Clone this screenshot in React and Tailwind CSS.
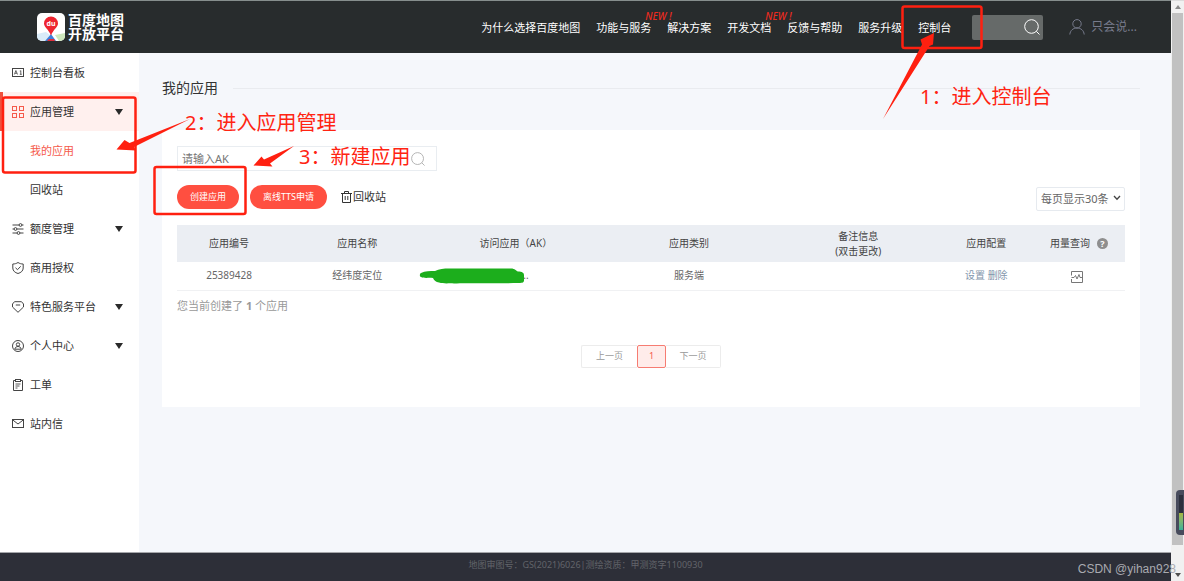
const NAV_ITEMS = [
  { label: '为什么选择百度地图' },
  { label: '功能与服务', isNew: true },
  { label: '解决方案' },
  { label: '开发文档', isNew: true },
  { label: '反馈与帮助' },
  { label: '服务升级' },
  { label: '控制台' },
];

const MENU = [
  { label: '控制台看板', icon: 'board' },
  { label: '应用管理', icon: 'apps', expandable: true, active: true },
  { label: '我的应用', selected: true },
  { label: '回收站' },
  { label: '额度管理', icon: 'sliders', expandable: true },
  { label: '商用授权', icon: 'shield' },
  { label: '特色服务平台', icon: 'gem', expandable: true },
  { label: '个人中心', icon: 'user', expandable: true },
  { label: '工单', icon: 'clipboard' },
  { label: '站内信', icon: 'mail' },
];

const ICONS = {
  board: (
    <>
      <rect x="0.5" y="1.5" width="11" height="8" />
      <path d="M2.3 7.500 3.900 3.500l1.600 4M3 6.300h1.900M8.800 3.500v4M7.800 7.300h2M7.800 4h1" strokeWidth="0.8" />
    </>
  ),
  apps: (
    <>
      <rect x="0.5" y="0.5" width="4" height="4" />
      <rect x="7.5" y="0.5" width="4" height="4" />
      <rect x="0.5" y="7.5" width="4" height="4" />
      <rect x="7.5" y="7.5" width="4" height="4" />
    </>
  ),
  sliders: (
    <>
      <path d="M0.5 2H7M10 2h1.500M0.500 6H2M5 6h6.500M0.500 10H5M8 10h3.500" />
      <circle cx="8.5" cy="2" r="1.4" />
      <circle cx="3.5" cy="6" r="1.4" />
      <circle cx="6.5" cy="10" r="1.4" />
    </>
  ),
  shield: (
    <>
      <path d="M6 0.5C7.500 1.500 9.300 2 11.200 2v4c0 2.800-2.200 4.700-5.200 5.500C3 10.700.8 8.800.8 6V2C2.700 2 4.500 1.500 6 .5Z" />
      <path d="m3.500 5.800 2 1.900 3.200-3.400" />
    </>
  ),
  gem: (
    <>
      <path d="M2.500 0.700h7L11.500 3v3L6 11.300.5 6V3Z" strokeLinejoin="round" />
      <path d="M3.800 4h4.400" />
    </>
  ),
  user: (
    <>
      <circle cx="6" cy="6" r="5.500" />
      <circle cx="6" cy="4.500" r="1.700" />
      <path d="M2.800 9.200c.3-1.800 1.600-2.700 3.200-2.700s2.900.9 3.200 2.700Z" />
    </>
  ),
  clipboard: (
    <>
      <path d="M3.500 1.500h-2v10h9v-10h-2" />
      <rect x="3.5" y="0.5" width="5" height="2" />
      <path d="M3.500 5h5M3.500 7h4M3.500 9h2" strokeWidth="0.9" />
    </>
  ),
  mail: (
    <>
      <rect x="0.5" y="1.5" width="11" height="8" />
      <path d="m.8 2 5.200 4 5.200-4" />
    </>
  ),
};

function MenuIcon({ name }) {
  return (
    <svg className="h-3 w-3" viewBox="0 0 12 12" fill="none" stroke="currentColor" strokeWidth="1" aria-hidden="true">
      {ICONS[name]}
    </svg>
  );
}

function SearchIcon({ className }) {
  return (
    <svg className={className} viewBox="0 0 16 16" fill="none" stroke="currentColor" aria-hidden="true">
      <circle cx="7.5" cy="7.5" r="6.8" />
      <path d="m12.300 12.300 3.200 3.200" />
    </svg>
  );
}

function Logo() {
  return (
    <a href="#home" className="flex items-center gap-[3px] text-white">
      <svg className="h-7 w-7" viewBox="0 0 28 28" aria-hidden="true">
        <clipPath id="logo-clip">
          <rect width="28" height="28" rx="5" />
        </clipPath>
        <g clipPath="url(#logo-clip)">
          <rect width="28" height="28" fill="#fff" />
          <path d="M0 21 9 19l4 3-5 6H0Z" fill="#d9ecf8" />
          <path d="m14 21 5 7H8Z" fill="#3d7fd9" />
          <path d="M28 20 18 22l4 6h6Z" fill="#cfe8bd" />
          <path d="m10 28 2-2h5l1 2Z" fill="#e0303a" />
          <path d="M14 3.500a7 7 0 0 1 7 7c0 3.800-4.500 5.500-7 12-2.500-6.500-7-8.200-7-12a7 7 0 0 1 7-7Z" fill="#ee2530" />
        </g>
        <text x="14" y="13" textAnchor="middle" fontSize="7" fontWeight="700" fill="#fff">du</text>
      </svg>
      <span className="w-14 text-[14px] leading-[14px] font-bold break-all">百度地图开放平台</span>
    </a>
  );
}

function Header() {
  return (
    <header className="flex h-[53px] items-center border-t border-[#868e8d] bg-[#282c2d] pr-[34px] pl-[37px] text-white">
      <Logo />
      <nav className="ml-auto flex gap-4 pt-0.5 text-[11px] leading-4">
        {NAV_ITEMS.map((item) => (
          <a key={item.label} href="#nav" className="relative whitespace-nowrap">
            {item.label}
            {item.isNew && (
              <span className="absolute bottom-3.5 left-full -ml-1.5 text-[10px] leading-3 font-medium text-[#ec2b20] italic">
                NEW !
              </span>
            )}
          </a>
        ))}
      </nav>
      <div className="ml-[21px] flex h-[25px] w-[71px] items-center rounded-xs bg-[#666a69] pr-[3px]">
        <input type="text" aria-label="搜索" className="h-full w-0 flex-1 bg-transparent px-1 text-[11px] outline-none" />
        <button type="button" aria-label="搜索">
          <SearchIcon className="h-4 w-4" />
        </button>
      </div>
      <a href="#user" className="ml-[26px] flex items-center gap-1.5 text-[12px] leading-4 text-[#777b8c]">
        <svg className="h-4 w-4" viewBox="0 0 16 16" fill="none" stroke="currentColor" aria-hidden="true">
          <circle cx="8" cy="4.8" r="4.2" />
          <path d="M0.800 15.500C1.200 11.500 4 9 8 9s6.800 2.500 7.200 6.500" />
        </svg>
        只会说...
      </a>
    </header>
  );
}

function Sidebar() {
  return (
    <aside className="w-[139px] shrink-0 bg-white text-[11px] text-[#333]">
      <ul>
        {MENU.map((item) => (
          <li key={item.label}>
            <a
              href="#menu"
              className={`flex h-[39px] items-center border-l-[3px] pr-4 pl-[9px] ${
                item.active ? 'border-[#f0503c] bg-[#fff0ee]' : 'border-transparent'
              } ${item.selected ? 'text-[#f55a4b]' : ''}`}
            >
              <span className={`w-[18px] ${item.active ? 'text-[#f55a4b]' : 'text-[#444]'}`}>
                {item.icon && <MenuIcon name={item.icon} />}
              </span>
              <span className="flex-1 pt-0.5 whitespace-nowrap">{item.label}</span>
              {item.expandable && (
                <svg className="h-1.5 w-2" viewBox="0 0 8 6" fill="#2a2a2a" aria-hidden="true">
                  <path d="M0 0h8L4 6Z" />
                </svg>
              )}
            </a>
          </li>
        ))}
      </ul>
    </aside>
  );
}

function AppTable() {
  return (
    <table className="mt-4 w-full table-fixed text-center text-[10px] leading-[15px] text-[#444]">
      <colgroup>
        <col className="w-[104px]" />
        <col className="w-[152px]" />
        <col className="w-[165px]" />
        <col className="w-[181px]" />
        <col className="w-[157px]" />
        <col className="w-[99px]" />
        <col className="w-[89px]" />
      </colgroup>
      <thead className="bg-[#ebeef3]">
        <tr className="h-[37px]">
          <th className="font-normal">应用编号</th>
          <th className="font-normal">应用名称</th>
          <th className="font-normal">访问应用（AK）</th>
          <th className="font-normal">应用类别</th>
          <th className="font-normal">
            备注信息
            <br />
            (双击更改)
          </th>
          <th className="font-normal">应用配置</th>
          <th className="font-normal">
            <span className="flex items-center justify-center gap-[7px] pr-[3px]">
              用量查询
              <span className="h-[11px] w-[11px] rounded-full bg-[#8e8e8e] text-[9px] leading-[11px] font-bold text-white">?</span>
            </span>
          </th>
        </tr>
      </thead>
      <tbody>
        <tr className="h-7 border-b border-[#f0f1f3] text-[#666]">
          <td>25389428</td>
          <td>经纬度定位</td>
          <td className="pl-[90px] text-left">..</td>
          <td>服务端</td>
          <td />
          <td className="text-[#8296ac]">
            <a href="#setting">设置</a> <a href="#delete">删除</a>
          </td>
          <td className="pr-[7px]">
            <button type="button" aria-label="用量查询" className="align-middle">
              <svg className="h-3 w-3" viewBox="0 0 12 12" fill="none" stroke="#777" aria-hidden="true">
                <path d="M0.500 4.500v-4h11v11H.5V8M0.500 6.500h2.500l1.500-2 1.500 3.500 2-4.500 1 3h2.500" />
              </svg>
            </button>
          </td>
        </tr>
      </tbody>
    </table>
  );
}

function Pagination() {
  return (
    <div className="mt-[31px] flex justify-center text-[9px] leading-3 text-[#999]">
      <button type="button" className="h-[23px] w-[56px] rounded-l-xs border border-r-0 border-[#ececec]">上一页</button>
      <button type="button" className="h-[23px] w-[29px] rounded-xs border border-[#f67c72] bg-[#ffecea] text-[#f55a4b]">1</button>
      <button type="button" className="h-[23px] w-[55px] rounded-r-xs border border-l-0 border-[#ececec]">下一页</button>
    </div>
  );
}

function Content() {
  return (
    <main className="min-w-0 flex-1 pt-[25px] pr-[31px] pl-[23px]">
      <div className="flex items-center gap-[15px]">
        <h1 className="text-[14px] leading-5 text-[#333]">我的应用</h1>
        <div className="h-px flex-1 bg-[#e9ebef]" />
      </div>

      <section className="mt-8 bg-white px-[15px] pt-4 pb-[39px]">
        {/* AK search */}
        <div className="flex h-[25px] w-[260px] items-center border border-[#e9edf1] pr-[11px] pl-1">
          <input
            type="text"
            aria-label="AK"
            placeholder="请输入AK"
            className="h-full min-w-0 flex-1 text-[11px] outline-none placeholder:text-[#757575]"
          />
          <button type="button" aria-label="搜索AK" className="text-[#aaa]">
            <SearchIcon className="h-3.5 w-3.5" />
          </button>
        </div>

        {/* Toolbar */}
        <div className="mt-3.5 flex h-6 items-center">
          <button type="button" className="h-6 w-[62px] rounded-full bg-[#ff4f40] text-[9px] text-white">创建应用</button>
          <button type="button" className="ml-[11px] h-6 w-[77px] rounded-full bg-[#ff4f40] text-[9px] text-white">离线TTS申请</button>
          <a href="#recycle" className="ml-3.5 flex items-center gap-px text-[11px] text-[#333]">
            <svg className="h-3 w-[11px]" viewBox="0 0 11 12" fill="none" stroke="currentColor" aria-hidden="true">
              <path d="M0 2.500h11M3.500 2.500v-2h4v2M1.500 2.500v9h8v-9M4.200 5v4M6.800 5v4" />
            </svg>
            回收站
          </a>
          <div className="relative ml-auto h-6 w-[89px]">
            <select
              aria-label="每页显示条数"
              className="h-full w-full appearance-none rounded-xs border border-[#e6eaef] bg-white pl-1 text-[11px] text-[#666]"
            >
              <option>每页显示30条</option>
            </select>
            <svg className="pointer-events-none absolute top-[10px] right-1 h-1.5 w-2" viewBox="0 0 8 6" fill="none" stroke="#444" strokeWidth="1.3" aria-hidden="true">
              <path d="m1 1 3 3.300L7 1" />
            </svg>
          </div>
        </div>

        <AppTable />
        <p className="mt-[7px] text-[11px] leading-4 text-[#999]">
          您当前创建了 <b>1</b> 个应用
        </p>
        <Pagination />
      </section>
    </main>
  );
}

function Scrollbar() {
  return (
    <div className="relative flex w-[13px] shrink-0 flex-col border-t border-[#dcdcdc] bg-[#f1f1f1] px-px">
      <svg className="mx-auto mt-1 h-1 w-1.5 shrink-0" viewBox="0 0 6 4" fill="#8a8a8a" aria-hidden="true">
        <path d="M3 0 6 4H0Z" />
      </svg>
      <div className="mt-1 mb-7 flex-1 bg-[#c1c1c1]" />
      <svg className="mx-auto mb-1 h-1 w-1.5 shrink-0" viewBox="0 0 6 4" fill="#505050" aria-hidden="true">
        <path d="M0 0h6L3 4Z" />
      </svg>
      <div className="absolute right-0 bottom-[46px] h-[45px] w-2 rounded-l-sm bg-[#474b5c] py-[5px] pl-[3px]">
        <div className="h-[18px] w-1 bg-[#2c303d]" />
        <div className="h-[17px] w-1 bg-linear-to-b from-[#a5b840] to-[#38b298]" />
      </div>
    </div>
  );
}

/* Hand-drawn step marks that lie over the page */
function Annotations() {
  return (
    <div className="pointer-events-none absolute inset-0 overflow-hidden text-[20px] leading-7 whitespace-nowrap text-[#ff2412]">
      <svg className="absolute inset-0 h-full w-full" fill="none" aria-hidden="true">
        <g stroke="#ff2010" strokeWidth="2.5">
          <rect x="902.5" y="6.5" width="79" height="41.5" rx="2" />
          <rect x="3" y="97.5" width="132.5" height="75" rx="2" />
          <rect x="154.5" y="167" width="91" height="47" rx="2" />
        </g>
        <g fill="#ff2010">
          <path d="M883 119 922 44.500 920.500 39.500 934 33 933 44.500 929.500 46Z" />
          <path d="M190 119 129.500 143 124.500 140 116.500 149.500 136 150.500 134 147Z" />
          <path d="M294 146 264 159.500 261.500 156.500 253.500 165.500 272.500 166.500 270 163.500Z" />
        </g>
        <path
          d="M421 273c4-2 9-2 14-2 4-2 9-2.500 14-2.500h62c4 0 5 2.500 7 3 4 0 6 1 6 4v5c0 2.500-3 2.500-6 2.500-20 .5-50 0-64 .5-5-.5-10 .5-15-1-3-.5-5-2-6-4.500-5-.5-9 .5-12-1-2-1-1-3.500 0-4Z"
          fill="#1cae1c"
        />
      </svg>
      <span className="absolute top-[83px] left-[920px]">1：进入控制台</span>
      <span className="absolute top-[109px] left-[185px]">2：进入应用管理</span>
      <span className="absolute top-[143px] left-[299px]">3：新建应用</span>
      <span className="absolute right-2 bottom-1 font-['Liberation_Sans',sans-serif] text-[12px] leading-4 text-[#a9aab0]">
        CSDN @yihan928
      </span>
    </div>
  );
}

export default function App() {
  return (
    <div className="relative flex min-h-screen bg-[#f5f7fb] font-['Noto_Sans','Noto_Sans_CJK_SC',sans-serif]">
      <div className="flex min-w-0 flex-1 flex-col">
        <Header />
        <div className="flex flex-1">
          <Sidebar />
          <Content />
        </div>
        <footer className="h-[29px] border-t border-[#a5a6aa] bg-[#2d2f38] pt-1 text-center text-[9px] leading-4 text-[#62646a]">
          地图审图号：GS(2021)6026|测绘资质：甲测资字1100930
        </footer>
      </div>
      <Scrollbar />
      <Annotations />
    </div>
  );
}
